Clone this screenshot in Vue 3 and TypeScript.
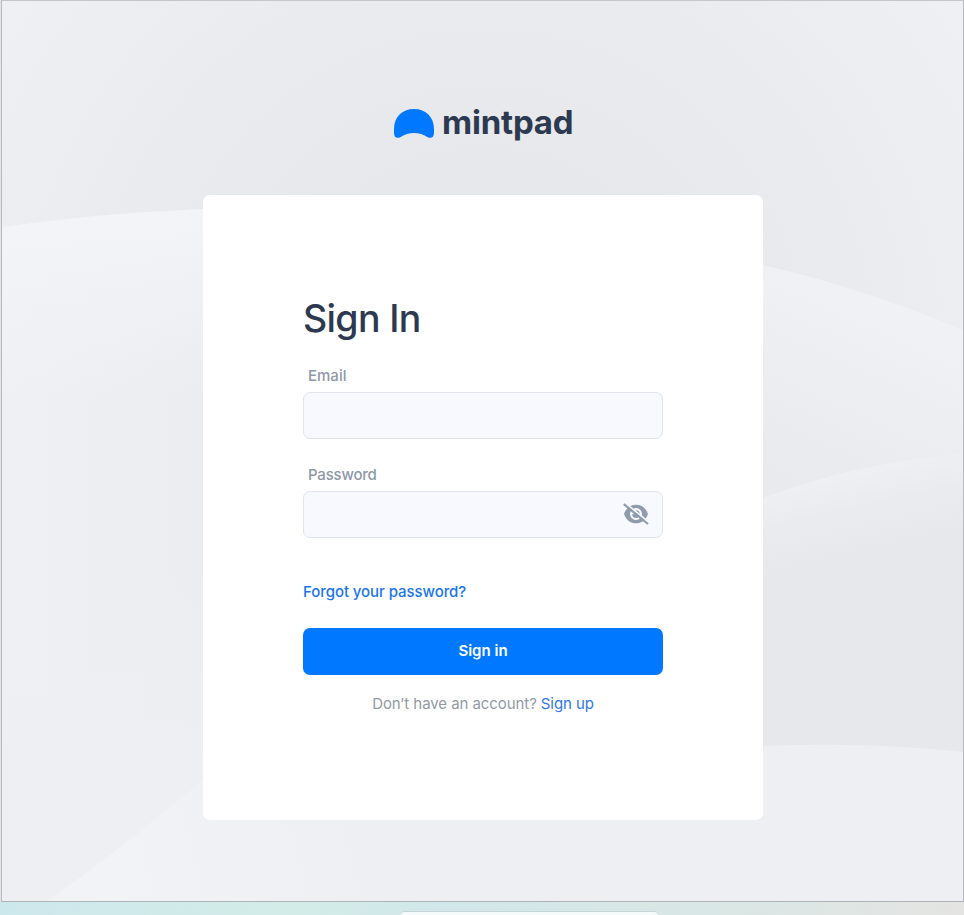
<script setup lang="ts">
import { ref } from 'vue'

const email = ref('')
const password = ref('')
const passwordVisible = ref(false)
</script>

<template>
  <div class="desktop">
    <main class="window">
      <svg class="waves" viewBox="0 0 960 900" preserveAspectRatio="none" aria-hidden="true">
        <defs>
          <radialGradient id="base" gradientUnits="userSpaceOnUse" cx="480" cy="350" r="640">
            <stop offset="0" stop-color="#e4e6e9" />
            <stop offset="0.5" stop-color="#e8eaed" />
            <stop offset="1" stop-color="#f0f1f5" />
          </radialGradient>
          <linearGradient id="left" gradientUnits="userSpaceOnUse" x1="0" y1="0" x2="250" y2="0">
            <stop offset="0" stop-color="#eff0f4" />
            <stop offset="0.5" stop-color="#edeef2" />
            <stop offset="1" stop-color="#eaebef" />
          </linearGradient>
          <linearGradient id="crest" gradientUnits="userSpaceOnUse" x1="0" y1="210" x2="0" y2="400">
            <stop offset="0" stop-color="#f3f4f8" />
            <stop offset="1" stop-color="#f3f4f8" stop-opacity="0" />
          </linearGradient>
          <linearGradient id="lower" gradientUnits="userSpaceOnUse" x1="0" y1="560" x2="0" y2="760">
            <stop offset="0" stop-color="#eeeff3" stop-opacity="0" />
            <stop offset="1" stop-color="#eeeff3" />
          </linearGradient>
          <linearGradient id="right" gradientUnits="userSpaceOnUse" x1="890" y1="280" x2="800" y2="480">
            <stop offset="0" stop-color="#f1f2f6" />
            <stop offset="0.5" stop-color="#eceef1" />
            <stop offset="1" stop-color="#e8eaed" />
          </linearGradient>
          <linearGradient id="fold" gradientUnits="userSpaceOnUse" x1="840" y1="468" x2="860" y2="555">
            <stop offset="0" stop-color="#eff0f4" />
            <stop offset="0.5" stop-color="#eaebee" />
            <stop offset="1" stop-color="#e7e8eb" />
          </linearGradient>
          <linearGradient id="floor" gradientUnits="userSpaceOnUse" x1="100" y1="880" x2="620" y2="760">
            <stop offset="0" stop-color="#f2f3f7" />
            <stop offset="0.5" stop-color="#eeeff3" />
            <stop offset="1" stop-color="#eeeff2" />
          </linearGradient>
        </defs>
        <rect width="960" height="900" fill="url(#base)" />
        <path d="M0 226Q100 212 200 208L500 230V900H0Z" fill="url(#left)" />
        <path d="M0 226Q100 212 200 208L500 230V900H0Z" fill="url(#crest)" />
        <rect y="560" width="500" height="340" fill="url(#lower)" />
        <path d="M500 215L760 264Q860 287 960 329V900H500Z" fill="url(#right)" />
        <path d="M500 560L760 497Q850 462 960 453V900H500Z" fill="url(#fold)" />
        <path d="M45 900C110 855 150 820 200 780Q350 740 760 745Q870 741 960 751V900Z" fill="url(#floor)" />
      </svg>

      <header class="brand">
        <svg class="mark" viewBox="0 0 40 30" aria-hidden="true">
          <path
            d="M0 20C0 8 8 0 20 0S40 8 40 20V24C40 28.2 37.4 29.7 34.2 28.4C25 22.6 15 22.6 5.8 28.4C2.6 29.7 0 28.2 0 24Z"
            fill="#0078ff"
          />
        </svg>
        <span class="wordmark">mintpad</span>
      </header>

      <form class="card" @submit.prevent>
        <h1>Sign In</h1>
        <label class="email-label" for="email">Email</label>
        <div class="field"><input id="email" v-model="email" type="email" /></div>
        <label class="password-label" for="password">Password</label>
        <div class="field">
          <input id="password" v-model="password" :type="passwordVisible ? 'text' : 'password'" />
          <button class="toggle" type="button" @click="passwordVisible = !passwordVisible">
            <svg viewBox="0 0 26 22" aria-hidden="true">
              <path
                fill-rule="evenodd"
                d="M1 11C3 5 7.5 1.7 13 1.7S23 5 25 11C23 17 18.500 20.300 13 20.300S3 17 1 11ZM13 5A6 6 0 1 0 13 17A6 6 0 1 0 13 5Z"
                fill="#8f9cae"
              />
              <path d="M12.800 7.200A3.900 3.900 0 1 1 13 15A3.900 3.900 0 0 1 9.200 11Q12.800 12 12.800 7.200Z" fill="#8f9cae" />
              <path d="M1.800 -.4L26 19.400" stroke="#f8f9fe" stroke-width="1.600" />
              <path d="M.8 1.200L25 21" stroke="#8f9cae" stroke-width="2.200" />
            </svg>
          </button>
        </div>
        <a class="forgot">Forgot your password?</a>
        <button class="submit" type="submit"><span>Sign in</span></button>
        <p class="signup"><span class="question">Don’t have an account?</span><a>Sign up</a></p>
      </form>
    </main>
    <footer class="shelf"><div class="dock"></div></footer>
  </div>
</template>

<style>
body {
  margin: 0;
  overflow: hidden;
}
</style>

<style scoped>
.desktop {
  box-sizing: border-box;
  width: 964px;
  height: 915px;
  display: flex;
  flex-direction: column;
  background: #e3e4e7;
  font-family: Inter, 'Liberation Sans', sans-serif;
  overflow: hidden;
}
.window {
  position: relative;
  box-sizing: border-box;
  width: 963px;
  height: 902px;
  flex: none;
  margin-left: 1px;
  border: 1px solid #b8babf;
  border-top-color: #c4c5c9;
  border-bottom-color: #aeb3b9;
  display: flex;
  flex-direction: column;
  align-items: center;
}
.waves {
  position: absolute;
  inset: 0;
  width: 100%;
  height: 100%;
}
.brand {
  position: relative;
  display: flex;
  align-items: flex-start;
  gap: 8px;
  height: 86px;
  padding-top: 108px;
  margin-left: 2px;
  width: 179px;
}
.mark {
  width: 40px;
  height: 30px;
  flex: none;
}
.wordmark {
  font-size: 33px;
  line-height: 40px;
  margin-top: -7px;
  font-weight: 700;
  letter-spacing: -0.2px;
  color: #2d3950;
}
.card {
  position: relative;
  box-sizing: border-box;
  width: 560px;
  height: 625px;
  margin-left: 1px;
  padding: 100px;
  display: flex;
  flex-direction: column;
  background: #fff;
  border-radius: 7px;
}
h1 {
  margin: -1px 0 1px;
  font-size: 37.5px;
  line-height: 50px;
  font-weight: 500;
  letter-spacing: -0.65px;
  color: #2d3950;
}
label {
  height: 20px;
  margin-left: 5px;
  font-size: 15px;
  line-height: 20px;
  font-weight: 500;
  color: #8e99a7;
}
.email-label {
  margin-top: 21px;
  margin-bottom: 6px;
}
.password-label {
  margin-top: 26px;
  margin-bottom: 6px;
  letter-spacing: -0.2px;
}
.field {
  box-sizing: border-box;
  height: 47px;
  display: flex;
  align-items: center;
  padding: 0 13px 0 14px;
  background: #f8f9fe;
  border: 1px solid #e0e3f1;
  border-radius: 7px;
}
input {
  flex: 1;
  min-width: 0;
  border: 0;
  outline: 0;
  background: transparent;
  font: inherit;
}
.toggle {
  border: 0;
  padding: 0 0 1px;
  background: none;
  width: 26px;
  height: 23px;
}
.toggle svg {
  display: block;
  width: 26px;
  height: 22px;
}
.forgot {
  align-self: flex-start;
  margin-top: 44px;
  font-size: 15px;
  line-height: 20px;
  font-weight: 500;
  letter-spacing: -0.07px;
  color: #1a75ea;
  white-space: nowrap;
}
.submit {
  height: 47px;
  margin-top: 26px;
  padding: 0 0 2px;
  border: 0;
  border-radius: 7px;
  background: #0078ff;
  color: #fff;
  font-family: inherit;
  font-size: 15px;
  font-weight: 600;
}
.signup {
  margin: 19px 0 0;
  display: flex;
  justify-content: center;
  gap: 4px;
  font-size: 15px;
  line-height: 20px;
  letter-spacing: -0.07px;
  color: #929aa5;
  white-space: nowrap;
}
.signup a {
  color: #3078e5;
}
.shelf {
  height: 13px;
  display: flex;
  justify-content: center;
  align-items: flex-end;
  background: linear-gradient(90deg, #cde8ec 0, #d3ece8 31%, #d1e7e9 45%, #dae7e5 75%, #e4e4e2 100%);
}
.dock {
  box-sizing: border-box;
  width: 257px;
  height: 4px;
  margin-left: 94px;
  border-radius: 7px 7px 0 0;
  background: #f5fafb;
  border-top: 1px solid #c5d5d7;
}
</style>
